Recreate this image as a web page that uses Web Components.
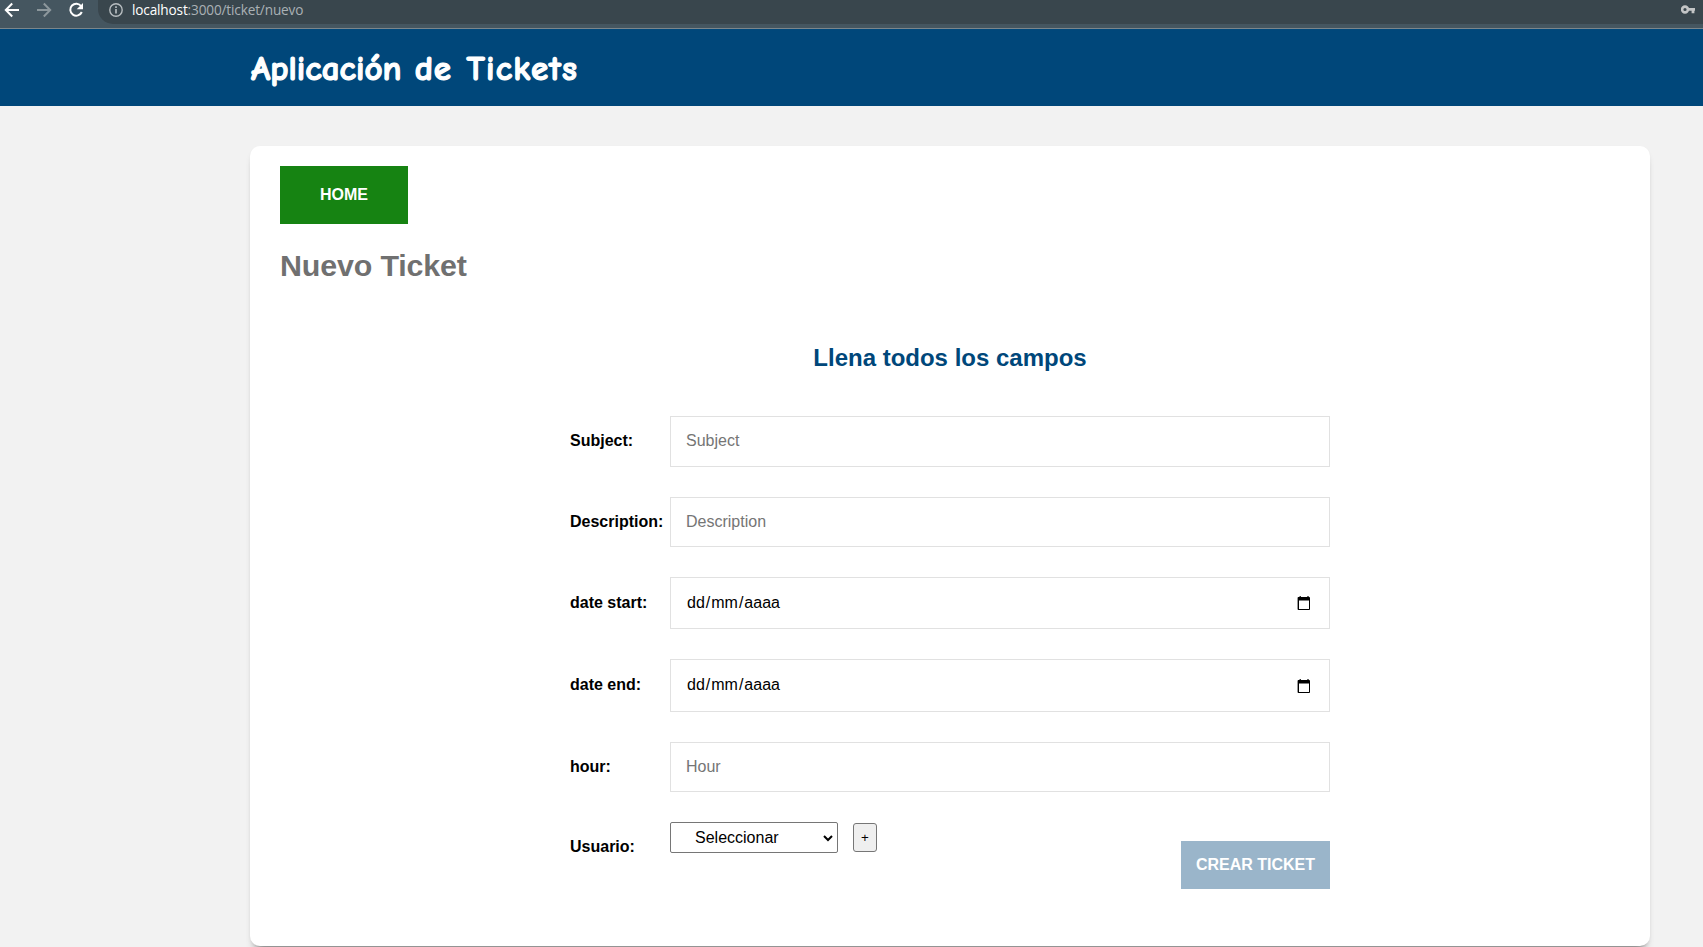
<!DOCTYPE html>
<html lang="es">
<head>
<meta charset="utf-8">
<title>Aplicación de Tickets</title>
<style>
html,body{margin:0;height:100%;overflow:hidden}
body{background:#f2f2f2;font:16px/18px "Liberation Sans",Arial,sans-serif;color:#000}
</style>
</head>
<body>
<ticket-app></ticket-app>
<script>
const define = (name, html) => customElements.define(name, class extends HTMLElement {
  constructor() {
    super();
    const t = document.createElement('template');
    t.innerHTML = html;
    this.attachShadow({ mode: 'open' }).appendChild(t.content.cloneNode(true));
  }
});

define('browser-bar', `
<style>
:host{display:flex;box-sizing:border-box;height:29px;background:#455660;border-bottom:1px solid #7b868b;font:13.6px/20px "Open Sans","Noto Sans",sans-serif}
.nav{display:flex;width:98px;flex:none;height:20px}
.nav svg{width:32px;height:20px;flex:none}
.url{flex:1;display:flex;height:24px;background:#39464d;border-radius:0 0 0 15px/0 0 0 15px;color:#aab1b5;overflow:hidden}
.info{width:34px;height:20px;flex:none}
.text{flex:1;letter-spacing:-.15px;white-space:nowrap}
b{font-weight:400;color:#fff}
.key{width:22px;height:20px;flex:none}
</style>
<div class="nav">
<svg viewBox="0 0 32 20" fill="none" stroke="#fff" stroke-width="2"><path d="M19 10H6M12.2 3.5L5.8 10l6.4 6.5"/></svg>
<svg viewBox="0 0 32 20" fill="none" stroke="#8c979c" stroke-width="2"><path d="M5 10h13M11.8 3.5L18.2 10l-6.4 6.5"/></svg>
<svg viewBox="0 0 32 20" fill="none" stroke="#fff" stroke-width="2"><path d="M17.2 6.2A6 6 0 1 0 17.8 12"/><path d="M19 3v6.3h-6.3z" fill="#fff" stroke="none"/></svg>
</div>
<div class="url">
<svg class="info" viewBox="0 0 34 20" fill="none" stroke="#b7bdc0"><circle cx="18" cy="10" r="6.2" stroke-width="1.4"/><path d="M18 9v4.6M18 6.2v1.7" stroke-width="1.7"/></svg>
<div class="text"><b>localhost</b>:3000/ticket/nuevo</div>
<svg class="key" viewBox="0 0 22 20" fill="none" stroke="#c3c5c6"><circle cx="4" cy="9.5" r="2.9" stroke-width="2.6"/><path d="M7 9.3h7M12 9v4.2" stroke-width="2.8"/></svg>
</div>`);

define('app-header', `
<style>
:host{display:flex;box-sizing:border-box;height:77px;padding:0 0 0 251px;align-items:center;background:#00477a}
h1{margin:2px 0 0;color:#fff;font:700 35px/44px "Comic Sans MS","Comic Neue",Lato,sans-serif;letter-spacing:.65px;-webkit-text-stroke:1.2px #fff;stroke-linejoin:round;white-space:nowrap}
</style><h1><slot></slot></h1>`);

define('home-link', `
<style>
:host{display:flex;width:128px;height:58px;align-items:center;justify-content:center;background:#168312;color:#fff;font-weight:700}
</style><slot></slot>`);

define('form-row', `
<style>
:host{display:grid;grid-template-columns:100px 660px;height:var(--h,50px);align-items:center}
label{font-weight:700;white-space:nowrap;padding-bottom:var(--lift,0)}
slot{display:block}
</style><label><slot name="label"></slot></label><slot></slot>`);

define('text-field', `
<style>
:host{display:flex;box-sizing:border-box;height:var(--h,50px);align-items:center;padding:0 15px var(--lift,0);border:1px solid #e1e1e1;background:#fff;color:#757575}
</style><slot></slot>`);

define('date-field', `
<style>
:host{display:flex;box-sizing:border-box;height:var(--h,52px);align-items:center;justify-content:space-between;padding:0 17px 0 15px;border:1px solid #e1e1e1;background:#fff}
div{padding-bottom:var(--lift,0)}
i{font-style:normal;padding:0 1px}
svg{width:16px;height:16px}
</style><div><i>dd</i>/<i>mm</i>/<i>aaaa</i></div>
<svg viewBox="0 0 16 16"><path d="M3.6 1h1.2v1h6.6V1h1.2v1h.6q.8 0 .8 1v11q0 1-.8 1H2.4q-.8 0-.8-1V3q0-1 .8-1h1.2zM3 5.6V14h10V5.6z" fill="#000" fill-rule="evenodd"/></svg>`);

define('user-picker', `
<style>
:host{display:flex;gap:15px;height:67px;align-items:flex-start}
.select{display:flex;box-sizing:border-box;width:168px;height:31px;padding:0 4px 0 24px;border:1px solid #767676;border-radius:2px;align-items:center;justify-content:space-between}
.select svg{width:10px;height:8px}
button{box-sizing:border-box;width:24px;height:29px;margin:1px 0 0;padding:0;border:1px solid #767676;border-radius:3px;background:#efefef;color:#000;font:13.333px "Liberation Sans",Arial,sans-serif}
.submit{display:flex;width:149px;height:48px;margin:19px 0 0 auto;align-items:center;justify-content:center;background:#9ab5ca;color:#fff;font-weight:700;white-space:nowrap}
</style>
<div class="select"><span>Seleccionar</span><svg viewBox="0 0 10 8" fill="none" stroke="#000" stroke-width="2"><path d="M1 2l4 4 4-4"/></svg></div>
<button>+</button>
<div class="submit">CREAR TICKET</div>`);

define('ticket-card', `
<style>
:host{display:block;box-sizing:border-box;width:1400px;height:800px;margin:40px 0 0 250px;padding:20px 30px 0;background:#fff;border-radius:10px;box-shadow:0 7px 8px -6px #000000b0,0 1px 3px #00000008}
h2{margin:23px 0 0;font-size:30.4px;line-height:36px;color:#707070;letter-spacing:-.15px}
h3{margin:61px 0 0;font-size:24px;line-height:28px;color:#00477a;text-align:center}
.form{display:grid;gap:30px;width:760px;margin:44px 0 0 290px}
</style>
<home-link>HOME</home-link>
<h2>Nuevo Ticket</h2>
<h3>Llena todos los campos</h3>
<div class="form">
<form-row style="--h:51px;--lift:1px"><span slot="label">Subject:</span><text-field>Subject</text-field></form-row>
<form-row style="--h:50px"><span slot="label">Description:</span><text-field>Description</text-field></form-row>
<form-row style="--h:52px"><span slot="label">date start:</span><date-field></date-field></form-row>
<form-row style="--h:53px;--lift:2px"><span slot="label">date end:</span><date-field></date-field></form-row>
<form-row style="--h:50px"><span slot="label">hour:</span><text-field>Hour</text-field></form-row>
<form-row style="--h:50px"><span slot="label">Usuario:</span><user-picker style="margin-bottom:-17px"></user-picker></form-row>
</div>`);

define('ticket-app', `
<style>
:host{display:flow-root}
.first{letter-spacing:0}
.last{letter-spacing:1.15px;margin-left:2px}
</style>
<browser-bar></browser-bar>
<app-header><span class="first">Aplicación</span> de <span class="last">Tickets</span></app-header>
<ticket-card></ticket-card>`);
</script>
</body>
</html>
